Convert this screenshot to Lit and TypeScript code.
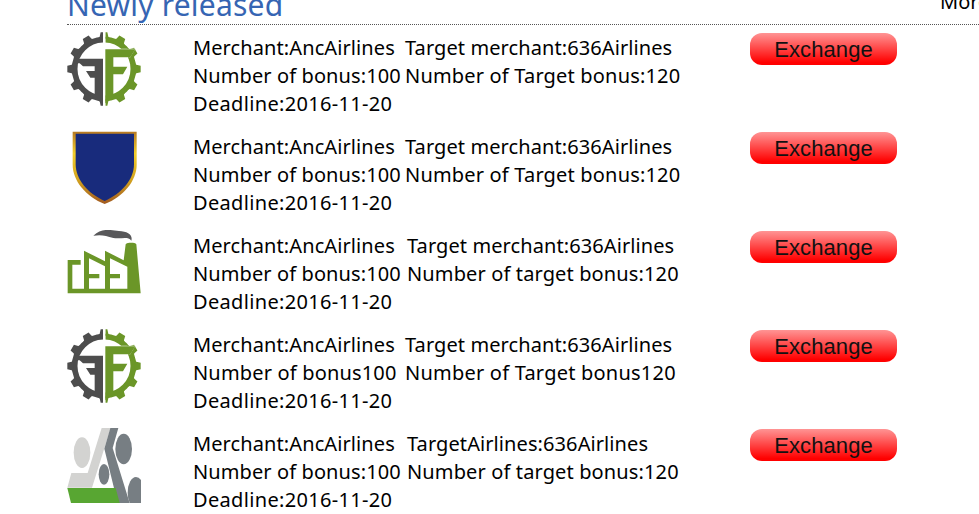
import { LitElement, html, css, svg } from "lit";
import { customElement, property } from "lit/decorators.js";

type IconName = "gear" | "shield" | "factory" | "people";

/** A text and its tracking in pixels. */
type Label = [string, number];

interface Offer {
  icon: IconName;
  left: Label[];
  right: Label[];
  wide: boolean;
}

const merchant: Label = ["Merchant:AncAirlines", 0.1];
const bonus: Label = ["Number of bonus:100", 0.1];
const deadline: Label = ["Deadline:2016-11-20", 0.33];
const target: Label = ["Target merchant:636Airlines", 0.09];

const offers: Offer[] = [
  { icon: "gear", left: [merchant, bonus, deadline], right: [target, ["Number of Target bonus:120", 0.18]], wide: false },
  { icon: "shield", left: [merchant, bonus, deadline], right: [target, ["Number of Target bonus:120", 0.18]], wide: false },
  { icon: "factory", left: [merchant, bonus, deadline], right: [target, ["Number of target bonus:120", 0.13]], wide: true },
  { icon: "gear", left: [merchant, ["Number of bonus100", 0.17], deadline], right: [target, ["Number of Target bonus120", 0.22]], wide: false },
  { icon: "people", left: [merchant, bonus, deadline], right: [["TargetAirlines:636Airlines", 0.09], ["Number of target bonus:120", 0.13]], wide: true },
];

const teeth = Array.from({ length: 12 }, (_, i) => i * 30);

const gearRing = svg`
  <circle cx="111" cy="111" r="88" fill="none" stroke="currentColor" stroke-width="17"/>
  ${teeth.map((a) => svg`<path d="M91 20 L98 14 L101 1 H121 L124 14 L131 20 Z" fill="currentColor" transform="rotate(${a} 111 111)"/>`)}`;

const icons = {
  gear: svg`
    <defs>
      <clipPath id="l"><rect width="108" height="222"/></clipPath>
      <clipPath id="r"><path d="M115 0 H222 V82 H183 V76 H190 L205 50 H115 Z M115 82 H222 V222 H115 Z"/></clipPath>
    </defs>
    <g clip-path="url(#l)" color="#4d4d4d">${gearRing}
      <path d="M22 80 H108 V214 L83 200 V137 H70 L57 117 H83 V103 H48 L38 94 H22 Z" fill="currentColor"/></g>
    <g clip-path="url(#r)" color="#6b9628">${gearRing}</g>
    <path d="M115 52 H205 L190 76 H139 V104 H181 L168 127 H139 V196 L115 214 Z" fill="#6b9628"/>`,
  shield: svg`
    <defs><linearGradient id="gold" x1="0" y1="0" x2="0" y2="1">
      <stop offset="0" stop-color="#b77a22"/><stop offset=".3" stop-color="#f0cd2c"/>
      <stop offset=".65" stop-color="#d4a51e"/><stop offset="1" stop-color="#a25a20"/>
    </linearGradient></defs>
    <path d="M17 2 H209 V101 C209 148 170 197 113 219 C56 197 17 148 17 101 Z" fill="url(#gold)"/>
    <path d="M26 8 H201 V100 C201 145 164 188 113 210 C62 188 26 145 26 100 Z" fill="#182b7c"/>`,
  factory: svg`
    <path d="M2 90 H41 V104 H16 V176 H51 V62 L114 94 V62 L170 91 L176 43 Q178 38 187 38 H198 Q206 38 208 43 L221 190 H2 Z" fill="#6b9628"/>
    <path d="M66 85 L114 109 V176 H66 Z M129 85 L181 110 V176 H129 Z" fill="#fff"/>
    <path d="M65 132 H97 V145 H65 Z M128 132 H159 V145 H128 Z" fill="#6b9628"/>
    <path d="M79 17 C104 -7 130 0 156 3 C182 4 198 14 193 32 C182 17 163 28 139 24 C116 17 103 13 79 17 Z" fill="#58585a"/>`,
  people: svg`
    <g fill="#d3d3d1"><ellipse cx="45" cy="74" rx="25" ry="46"/>
      <path d="M104 0 H131 L75 179 H1 L13 135 H62 Z"/></g>
    <g fill="#777e83"><path d="M130 0 H154 L137 60 L188 225 H152 L112 62 Z"/>
      <ellipse cx="170" cy="63" rx="25" ry="46"/><ellipse cx="111" cy="139" rx="16" ry="31"/>
      <ellipse cx="207" cy="194" rx="25" ry="47"/></g>
    <path d="M1 180 H146 L158 225 H12 Z" fill="#58a632"/>`,
};

@customElement("offer-icon")
export class OfferIcon extends LitElement {
  @property() name: IconName = "gear";
  static styles = css`
    :host { display: block; width: 74px; height: 75px; }
    svg { display: block; width: 74px; height: 75px; }
  `;
  render() {
    return html`<svg viewBox="0 0 222 225" aria-hidden="true">${icons[this.name]}</svg>`;
  }
}

@customElement("app-root")
export class AppRoot extends LitElement {
  static styles = css`
    :host { display: block; height: 514px; overflow: hidden; background: #fff; color: #000;
      font-family: "Noto Sans", "Noto Sans CJK SC", sans-serif; font-size: 20px; }
    .head { display: flex; justify-content: space-between; align-items: flex-end; box-sizing: border-box;
      height: 25px; margin-left: 67px; border-bottom: 1px dotted #555; white-space: nowrap; }
    .title { margin: 0 0 -1px; font-size: 30px; font-weight: 400; line-height: 40px; letter-spacing: .2px; color: #3665b3; }
    .more { flex: none; width: 39px; line-height: 28px; margin-bottom: 8px; }
    .list { padding: 7px 0 0 67px; }
    .row { display: grid; grid-template-columns: 126px 557px 147px; height: 99px; align-items: start; }
    .details { display: grid; grid-template-columns: 212px auto; grid-auto-rows: 28px; line-height: 28px;
      padding-top: 2px; white-space: nowrap; }
    .wide { grid-template-columns: 214px auto; }
    .btn { width: 147px; height: 32px; margin-top: 1px; padding: 1px 0 0; border: 0; border-radius: 12px;
      background: linear-gradient(#ff9494, #ff0000 92%); color: #111;
      font: 22px/31px "Liberation Sans", Arial, sans-serif; letter-spacing: .1px; }
  `;

  private label([text, tracking]: Label) {
    return html`<span style="letter-spacing:${tracking}px">${text}</span>`;
  }

  render() {
    return html`
      <header class="head"><h2 class="title">Newly released</h2><span class="more">More</span></header>
      <main class="list">
        ${offers.map((o) => html`
          <section class="row">
            <offer-icon name=${o.icon}></offer-icon>
            <div class="details ${o.wide ? "wide" : ""}">
              ${this.label(o.left[0])}${this.label(o.right[0])}
              ${this.label(o.left[1])}${this.label(o.right[1])}
              ${this.label(o.left[2])}
            </div>
            <button class="btn">Exchange</button>
          </section>`)}
      </main>`;
  }
}
